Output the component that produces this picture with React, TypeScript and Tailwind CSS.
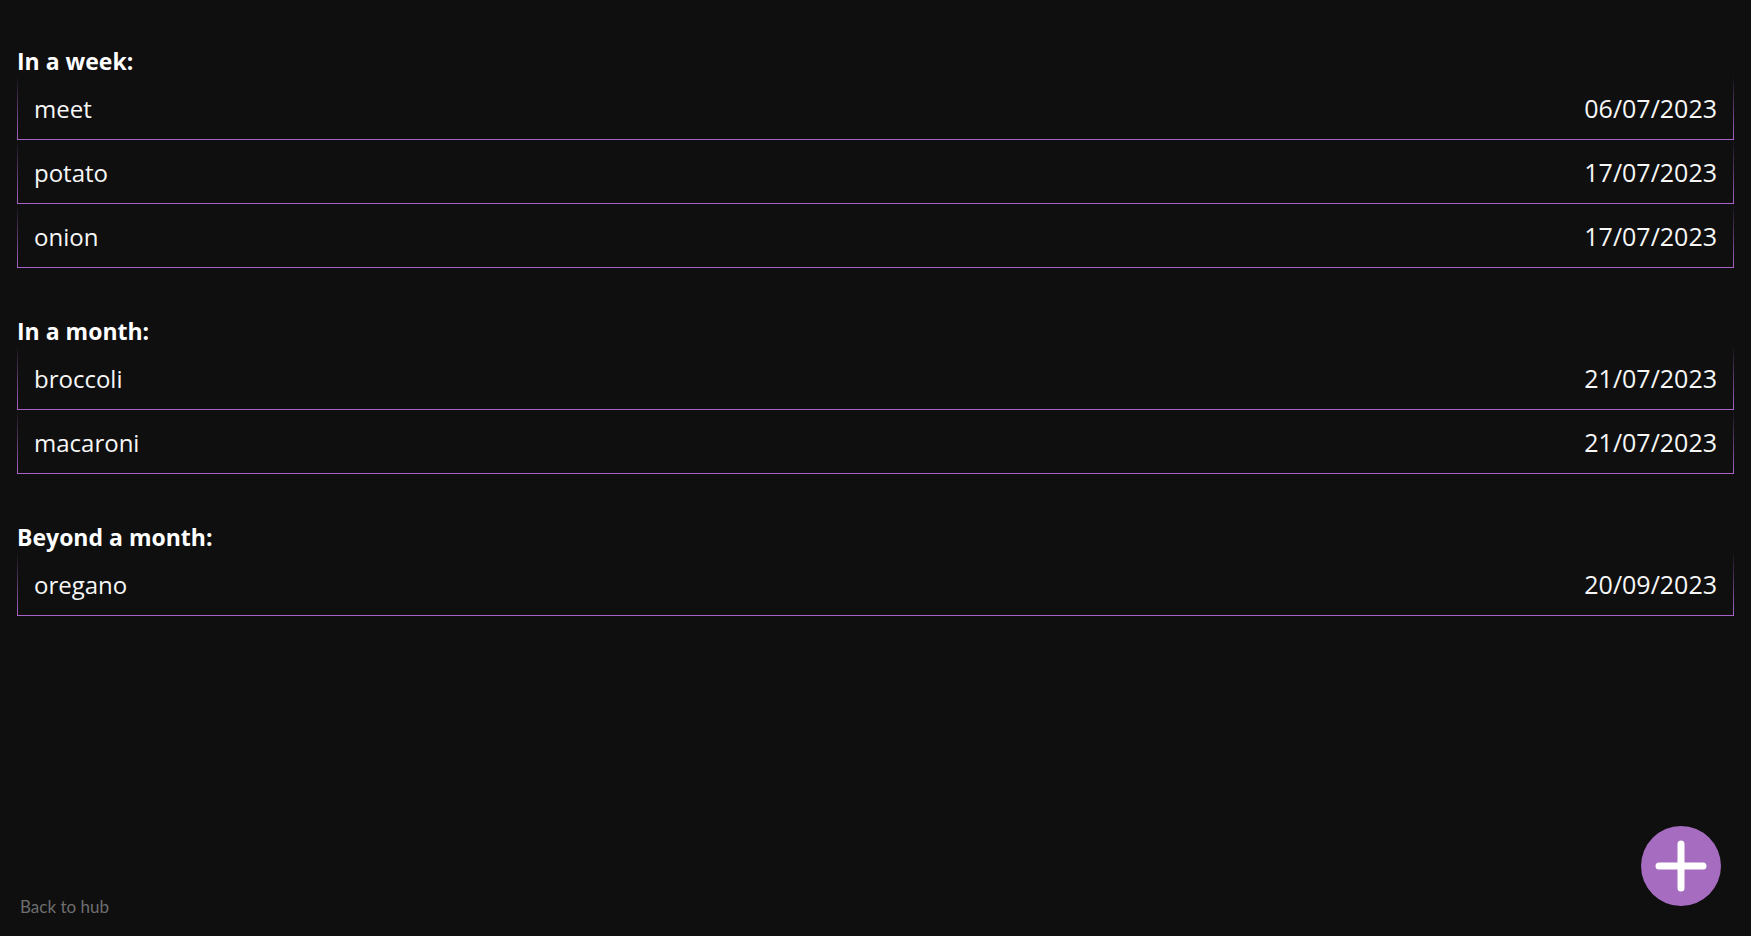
const groups = [
  {
    title: "In a week:",
    items: [
      { name: "meet", date: "06/07/2023" },
      { name: "potato", date: "17/07/2023" },
      { name: "onion", date: "17/07/2023" },
    ],
  },
  {
    title: "In a month:",
    items: [
      { name: "broccoli", date: "21/07/2023" },
      { name: "macaroni", date: "21/07/2023" },
    ],
  },
  {
    title: "Beyond a month:",
    items: [{ name: "oregano", date: "20/09/2023" }],
  },
];

function Row({ name, date }: { name: string; date: string }) {
  return (
    <li className="h-[64px] pt-[3px] flex items-center justify-between px-4 border-x border-b border-t-0 [border-image:linear-gradient(to_bottom,#0f0f0f,#a862c9)_1] text-[#f7f7f7]">
      <span className="text-[24px]">{name}</span>
      <span className="text-[25px]">{date}</span>
    </li>
  );
}

export default function App() {
  return (
    <div className="h-screen bg-[#0f0f0f] flex flex-col px-[17px] font-['Open_Sans',sans-serif] text-white overflow-hidden">
      <main className="pt-[47px] flex flex-col gap-[49px]">
        {groups.map((g) => (
          <section key={g.title}>
            <h2 className="text-[23px] leading-[29px] font-bold">{g.title}</h2>
            <ul>
              {g.items.map((it) => (
                <Row key={it.name} name={it.name} date={it.date} />
              ))}
            </ul>
          </section>
        ))}
      </main>

      <footer className="mt-auto pb-[17px] pl-[3px]">
        <a href="#" className="font-['Lato',sans-serif] text-[17px] leading-[24px] text-[#6e6e6e]">
          Back to hub
        </a>
      </footer>

      {/* add button */}
      <button
        className="fixed right-[30px] bottom-[30px] w-20 h-20 rounded-full bg-[#a66cbf] flex items-center justify-center"
        aria-label="Add"
      >
        <svg width="52" height="52" viewBox="0 0 52 52" fill="none">
          <path d="M26 4v44M4 26h44" stroke="white" strokeWidth="7" strokeLinecap="round" />
        </svg>
      </button>
    </div>
  );
}
